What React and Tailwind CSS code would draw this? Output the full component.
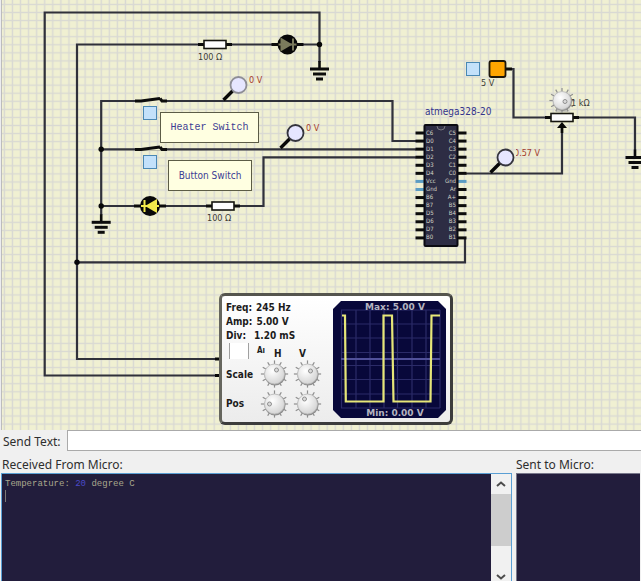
import React, { useState } from "react";

const LEFT_PINS = ["C6", "D0", "D1", "D2", "D3", "D4", "Vcc", "Gnd", "B6", "B7", "D5", "D6", "D7", "B0"];
const RIGHT_PINS = ["C5", "C4", "C3", "C2", "C1", "C0", "Gnd", "Ar", "A+", "B5", "B4", "B3", "B2", "B1"];
const PIN_PITCH = 8.07;

function Ground({ x, y }) {
  return (
    <g stroke="#0c0c0c" strokeWidth="3" strokeLinecap="butt">
      <path d={`M${x} ${y - 8}V${y}`} strokeWidth="2.6" />
      <path d={`M${x - 9.5} ${y}h19`} />
      <path d={`M${x - 6.5} ${y + 5}h13`} />
      <path d={`M${x - 3.5} ${y + 10}h7`} />
    </g>
  );
}

function Resistor({ x, y }) {
  return (
    <g>
      <path d={`M${x - 17} ${y}h34`} stroke="#0c0c0c" strokeWidth="3" />
      <rect x={x - 11} y={y - 4} width="22" height="8" fill="#fdfdfd" stroke="#15150f" strokeWidth="1.6" />
    </g>
  );
}

function Diode({ x, y, fill, flipped }) {
  const s = flipped ? -1 : 1;
  return (
    <g>
      <path d={`M${x - 16} ${y}h32`} stroke="#0c0c0c" strokeWidth="3" />
      <circle cx={x} cy={y} r="10" fill="#080808" />
      <path d={`M${x - 7 * s} ${y - 7}L${x + 5 * s} ${y}L${x - 7 * s} ${y + 7}Z`} fill={fill} />
      <path d={`M${x + 5.5 * s} ${y - 6}v12`} stroke={fill} strokeWidth="2" />
      <path d={`M${x - 9} ${y}h18`} stroke={fill} strokeWidth="2" />
    </g>
  );
}

function Switch({ x, y }) {
  return (
    <g stroke="#0c0c0c" fill="none">
      <path d={`M${x - 15} ${y}h30`} stroke="#f0f0d2" strokeWidth="3" />
      <path d={`M${x - 15} ${y + 0.5}h6L${x + 10} ${y - 2}`} strokeWidth="3" />
      <path d={`M${x + 10} ${y - 2}l2 2.5h5`} strokeWidth="3" />
    </g>
  );
}

function Probe({ x, y, ring }) {
  return (
    <g>
      <path d={`M${x - 15} ${y + 15}L${x - 5} ${y + 5}`} stroke="#080808" strokeWidth="3.4" />
      <circle cx={x} cy={y} r="8" fill="#e6e6ff" stroke={ring} strokeWidth="1.8" />
    </g>
  );
}

function Dial({ cx, cy, r, dotX, dotY }) {
  const rays = Array.from({ length: 12 }, (_, i) => (i * Math.PI) / 6);
  return (
    <g>
      {rays.map((a, i) => (
        <path
          key={i}
          d={`M${cx + Math.cos(a) * r} ${cy + Math.sin(a) * r}L${cx + Math.cos(a) * (r + 3.6)} ${cy + Math.sin(a) * (r + 3.6)}`}
          stroke="#8e8e8e"
          strokeWidth="1.2"
        />
      ))}
      <circle cx={cx + 0.5} cy={cy + 0.8} r={r + 0.6} fill="#8c8c8c" />
      <circle cx={cx} cy={cy} r={r} fill="url(#dialFace)" stroke="#bcbcbc" strokeWidth="0.8" />
      <circle cx={cx + dotX} cy={cy + dotY} r="2" fill="#dadada" stroke="#8f8f8f" strokeWidth="1" />
    </g>
  );
}

function Chip() {
  const top = 133;
  return (
    <g>
      {LEFT_PINS.map((name, i) => {
        const y = top + i * PIN_PITCH;
        const power = name === "Vcc" || name === "Gnd";
        return <path key={i} d={`M415.500 ${y}h10`} stroke={power ? "#5b9cc4" : "#0c0c0c"} strokeWidth="3" />;
      })}
      {RIGHT_PINS.map((name, i) => {
        const y = top + i * PIN_PITCH;
        return <path key={i} d={`M456.500 ${y}h10`} stroke={name === "Gnd" ? "#5b9cc4" : "#0c0c0c"} strokeWidth="3" />;
      })}
      <rect x="424.500" y="125" width="33" height="121" rx="1" fill="#2d2d44" stroke="#0b0b12" strokeWidth="2" />
      <path d="M437 126a4 4 0 0 0 8 0" fill="#34344a" stroke="#77777f" strokeWidth="1" />
      <g className="font-['DejaVu_Sans_Condensed','DejaVu_Sans',sans-serif] text-[6px]" fill="#d2d2c4">
        {LEFT_PINS.map((name, i) => (
          <text key={i} x="426" y={top + 1.5 + i * PIN_PITCH}>{name}</text>
        ))}
        {RIGHT_PINS.map((name, i) => (
          <text key={i} x="456" y={top + 1.5 + i * PIN_PITCH} textAnchor="end">{name}</text>
        ))}
      </g>
    </g>
  );
}

function Circuit() {
  return (
    <svg className="absolute inset-0 h-full w-full" aria-label="Circuit">
      <defs>
        <pattern id="grid" x="0.4" y="0.4" width="8.07" height="8.07" patternUnits="userSpaceOnUse">
          <path d="M4 0V8.070M0 4H8.070" stroke="#d9d9d3" strokeWidth="1.4" />
        </pattern>
        <radialGradient id="dialFace" cx="0.4" cy="0.35" r="0.7">
          <stop offset="0" stopColor="#ffffff" />
          <stop offset="1" stopColor="#d2d2d2" />
        </radialGradient>
        <clipPath id="readingClip">
          <rect x="516" y="145" width="40" height="16" />
        </clipPath>
      </defs>
      <rect width="100%" height="100%" fill="url(#grid)" />

      <g fill="none" stroke="#30313a" strokeWidth="2.2">
        <path d="M219 375.500H44.700V12.500H319.500V62" />
        <path d="M219 359H77V44.500H319.500" />
        <path d="M77 262.300H465V239" />
        <path d="M101.200 215V101H392.500V141H416" />
        <path d="M101.200 149.300H416" />
        <path d="M101.200 206H263.500V157.300H416" />
        <path d="M466 173.500H562V127" />
        <path d="M507 69H513.500V117.500H635V150" />
      </g>
      <g fill="#080808">
        <circle cx="77" cy="262.300" r="2.700" />
        <circle cx="101.200" cy="149.300" r="2.700" />
        <circle cx="101.200" cy="206" r="2.700" />
        <circle cx="319.500" cy="44.500" r="2.700" />
        <rect x="215" y="357.500" width="5" height="3" />
        <rect x="215" y="374" width="5" height="3" />
      </g>

      <Switch x={150} y={100.5} />
      <Switch x={150} y={149} />
      <Resistor x={215} y={44.5} />
      <Resistor x={223} y={206} />
      <Resistor x={562} y={117.5} />
      <Diode x={287.5} y={44.5} fill="#7b7b5c" />
      <Diode x={150} y={206} fill="#f2ea4c" flipped />
      <Ground x={319.5} y={69} />
      <Ground x={101.2} y={222.3} />
      <Ground x={635} y={157.500} />
      <Probe x={238.500} y={85} ring="#8e8e96" />
      <Probe x={295.500} y={133} ring="#34343c" />
      <Probe x={505.500} y={157.500} ring="#34343c" />

      <path d="M562 122L567 128H563.300V133H560.700V128H557Z" fill="#080808" />
      <rect x="556" y="107" width="12" height="5" fill="#c6c6bc" />
      <Dial cx={562} cy={100.500} r={9} dotX={3} dotY={1} />
      <path d="M506 69h6" stroke="#0c0c0c" strokeWidth="3" />
      <rect x="489.500" y="61" width="16" height="16" rx="2" fill="#ffa500" stroke="#1d1608" strokeWidth="1.800" />
      <Chip />

      <g className="font-['DejaVu_Sans_Condensed','DejaVu_Sans',sans-serif] text-[9px]" fill="#3c3c38">
        <text x="198" y="60">100 Ω</text>
        <text x="207" y="221">100 Ω</text>
        <text x="481" y="86">5 V</text>
        <text x="571" y="106">1 kΩ</text>
        <g fill="#a43a2c">
          <text x="249" y="83">0 V</text>
          <text x="306" y="131">0 V</text>
          <text x="514" y="156" clipPath="url(#readingClip)">0.57 V</text>
        </g>
      </g>
      <text x="425" y="115" fill="#33338c" className="font-['DejaVu_Sans_Condensed','DejaVu_Sans',sans-serif] text-[10px]">
        atmega328-20
      </text>
    </svg>
  );
}

function ToggleBox({ label, className }) {
  const [on, setOn] = useState(false);
  return (
    <button
      type="button"
      aria-label={label}
      aria-pressed={on}
      onClick={() => setOn(!on)}
      className={`absolute size-[14px] border border-[#4a88b4] bg-[#c3e1fa] ${className}`}
    />
  );
}

function Knob({ label, dotX, dotY }) {
  return (
    <button type="button" aria-label={label} className="h-[30px] w-[33px]">
      <svg viewBox="0 0 33 30" className="h-[30px] w-[33px]">
        <Dial cx={16.5} cy={15} r={10} dotX={dotX} dotY={dotY} />
      </svg>
    </button>
  );
}

function ScopeScreen() {
  return (
    <svg viewBox="333 301 113 117" className="h-[117px] w-[113px]">
      <path d="M341 301H438L446 309V410L438 418H341L333 410V309Z" fill="#08083a" />
      <path
        d="M341.500 310V408M356 310V408M370 310V408M384 310V408M397.500 310V408M412 310V408M426 310V408M440 310V408M341 310H440M341 324H440M341 338H440M341 352.500H440M341 365.500H440M341 379.500H440M341 394H440M341 408H440"
        stroke="#2b2b68"
        strokeWidth="1.200"
      />
      <path d="M341 359H440" stroke="#50509a" strokeWidth="2" />
      <path
        d="M342 315.500H345L345.800 401.500H383.500V315.500H392L393.500 401.500H430.500L431.500 315.500H440"
        fill="none"
        stroke="#e6e678"
        strokeWidth="2.200"
      />
      <g className="font-['DejaVu_Sans',sans-serif] text-[9px] font-bold" fill="#b4b4c0" textAnchor="middle">
        <text x="395" y="310">Max: 5.00 V</text>
        <text x="395" y="416">Min: 0.00 V</text>
      </g>
    </svg>
  );
}

function Oscilloscope() {
  return (
    <section
      aria-label="Oscilloscope"
      className="absolute left-[219px] top-[293px] flex w-[234px] justify-between rounded-md border-[3px] border-[#3c3c3c] border-l-[#66665e] border-t-[#55554e] bg-linear-to-b from-white to-[#ececec] pb-1 pl-1 pr-1 pt-[5px] font-['DejaVu_Sans_Condensed','DejaVu_Sans',sans-serif] text-[10px] font-bold text-[#1c1c1c]"
    >
      <div>
        <dl className="leading-[14px]">
          <div className="flex gap-1"><dt>Freq:</dt><dd>245 Hz</dd></div>
          <div className="flex gap-1"><dt>Amp:</dt><dd>5.00 V</dd></div>
          <div className="flex gap-2"><dt>Div:</dt><dd>1.20 mS</dd></div>
        </dl>
        <div className="flex h-4 items-center pl-[3px]">
          <input
            id="auto"
            type="checkbox"
            className="h-4 w-5 appearance-none border-x border-[#a0a0a0] bg-white"
          />
          <label htmlFor="auto" className="ml-2 w-[17px] text-[8px] leading-[8px]">Aı</label>
          <span className="w-[25px] pt-1">H</span>
          <span className="pt-1">V</span>
        </div>
        <div className="flex items-center">
          <span className="w-8">Scale</span>
          <Knob label="Horizontal scale" dotX={2} dotY={-4} />
          <Knob label="Vertical scale" dotX={3} dotY={-3} />
        </div>
        <div className="flex h-[29px] items-center">
          <span className="w-8">Pos</span>
          <Knob label="Horizontal position" dotX={-5} dotY={0} />
          <Knob label="Vertical position" dotX={-3} dotY={-5} />
        </div>
      </div>
      <ScopeScreen />
    </section>
  );
}

function SerialPanel() {
  return (
    <div className="flex min-h-0 flex-1 gap-1 pl-px pr-px">
      <section className="flex w-[511px] shrink-0 flex-col">
        <h2 className="h-[22px] pl-px leading-[27px]">Received From Micro:</h2>
        <div className="flex flex-1 border border-b-0 border-[#5a9fd4] bg-[#221d3c]">
          <div role="log" className="flex-1 px-[3px] pt-1 font-['Liberation_Mono',monospace] text-[9px] leading-[12px] text-[#a9a68c]">
            <p>Temperature: <span className="text-[#4a4ac8]">20</span> degree C</p>
            <div className="h-3 w-px bg-[#7c7a78]" />
          </div>
          <div className="flex w-5 flex-col bg-[#f1f1f1]">
            <button type="button" aria-label="Scroll up" className="flex h-5 items-center justify-center">
              <svg viewBox="0 0 10 6" className="h-[6px] w-[10px]"><path d="M1 5L5 1.500L9 5" fill="none" stroke="#4c4c4c" strokeWidth="2" /></svg>
            </button>
            <div className="h-[52px] bg-[#cdcdcd]" />
            <div className="flex-1" />
            <button type="button" aria-label="Scroll down" className="flex h-2 items-center justify-center">
              <svg viewBox="0 0 10 6" className="h-[6px] w-[10px]"><path d="M1 1L5 4.500L9 1" fill="none" stroke="#4c4c4c" strokeWidth="2" /></svg>
            </button>
          </div>
        </div>
      </section>
      <section className="flex flex-1 flex-col">
        <h2 className="h-[22px] leading-[27px]">Sent to Micro:</h2>
        <div role="log" className="flex-1 border-l border-t border-[#77778a] bg-[#221d3c]" />
      </section>
    </div>
  );
}

export default function App() {
  return (
    <main className="flex h-screen flex-col overflow-hidden bg-[#f0f0f0] font-['Noto_Sans','DejaVu_Sans',sans-serif] text-[12px] text-[#2e2e2e]">
      <div className="relative h-[430px] shrink-0 overflow-hidden bg-[#f0f0d2]">
        <Circuit />
        <div className="absolute inset-y-0 left-0 w-[2px] border-r border-[#bcbcbc] bg-[#ececf0]" />
        <ToggleBox label="Heater" className="left-[143px] top-[106px]" />
        <ToggleBox label="Button" className="left-[143px] top-[155px]" />
        <ToggleBox label="5 V supply" className="left-[466px] top-[62px]" />
        <div className="absolute left-[160px] top-[112px] flex h-[31px] w-[99px] items-center justify-center border border-[#5c5c46] bg-[#ffffe1] font-['Liberation_Mono',monospace] text-[10px] text-[#3c3c94]">
          Heater Switch
        </div>
        <div className="absolute left-[168px] top-[160px] flex h-[31px] w-[84px] items-center justify-center border border-[#5c5c46] bg-[#ffffe1] font-['DejaVu_Sans_Condensed','DejaVu_Sans',sans-serif] text-[10px] text-[#3c3c94]">
          Button Switch
        </div>
        <Oscilloscope />
      </div>
      <div className="flex h-[21px] shrink-0 items-stretch">
        <label htmlFor="send" className="w-[67px] pl-[3px] leading-[23px]">Send Text:</label>
        <input id="send" type="text" className="min-w-0 flex-1 border border-r-0 border-[#aaaaaa] bg-white px-1 outline-none" />
      </div>
      <SerialPanel />
    </main>
  );
}
